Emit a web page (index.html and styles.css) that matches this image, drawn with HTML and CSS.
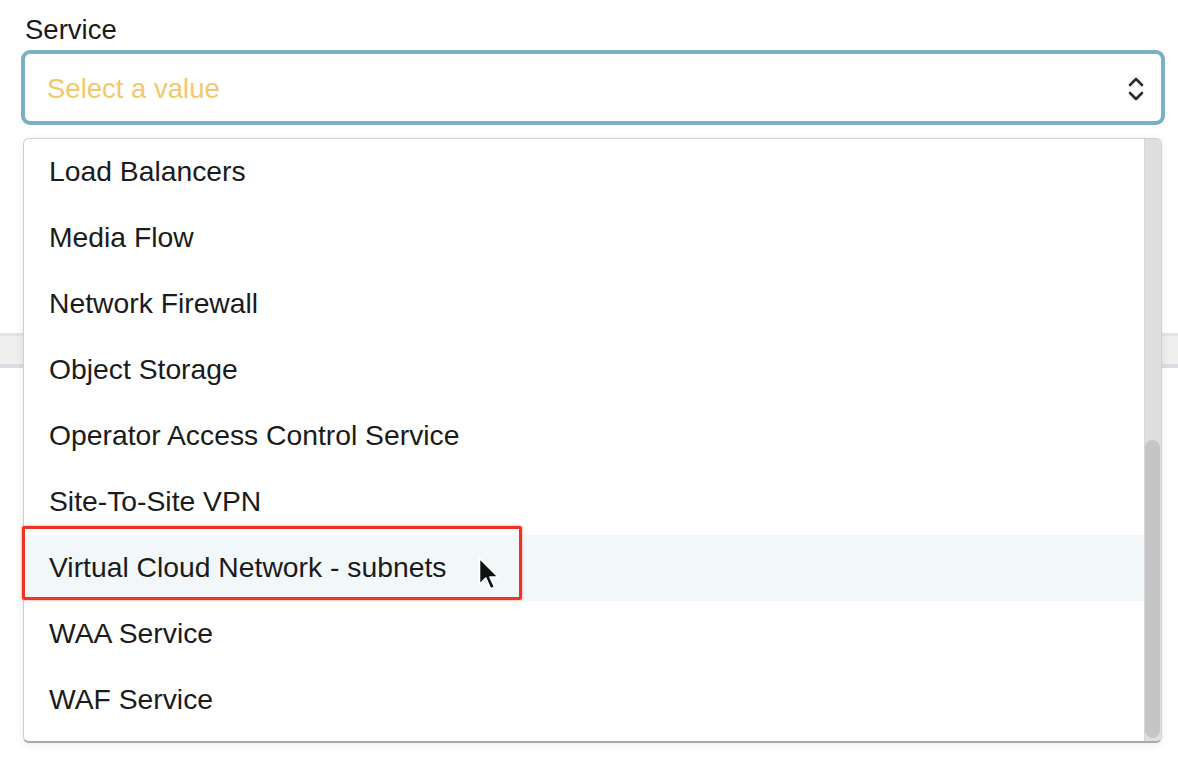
FILE: index.html
```html
<!DOCTYPE html>
<html>
<head>
<meta charset="utf-8">
<link rel="stylesheet" href="styles.css">
</head>
<body>
<div class="page">
  <div class="field">
    <label class="label">Service</label>
    <div class="select">
      <span class="placeholder">Select a value</span>
      <svg class="chev" width="18" height="28" viewBox="0 0 18 28"><path d="M3 10 L9 4 L15 10" fill="none" stroke="#2b2b2b" stroke-width="2.6" stroke-linecap="round" stroke-linejoin="round"/><path d="M3 18 L9 24 L15 18" fill="none" stroke="#2b2b2b" stroke-width="2.6" stroke-linecap="round" stroke-linejoin="round"/></svg>
    </div>
  </div>
  <div class="band"></div>

  <div class="dropdown">
    <ul class="options">
      <li class="opt">Load Balancers</li>
      <li class="opt">Media Flow</li>
      <li class="opt">Network Firewall</li>
      <li class="opt">Object Storage</li>
      <li class="opt">Operator Access Control Service</li>
      <li class="opt">Site-To-Site VPN</li>
      <li class="opt hover">Virtual Cloud Network - subnets</li>
      <li class="opt">WAA Service</li>
      <li class="opt">WAF Service</li>
    </ul>
    <div class="scrollbar"><div class="thumb"></div></div>
  </div>

  <div class="callout"></div>
  <svg class="cursor" width="26" height="38" viewBox="0 0 24 36"><path d="M2 2 L2 27 L8 21 L12.5 31 L16.5 29.5 L12 20 L20 20 Z" fill="#111" stroke="#fff" stroke-width="1.6" stroke-linejoin="round"/></svg>
</div>
</body>
</html>
```
FILE: styles.css
```css
html, body {
  margin: 0;
  padding: 0;
  background: #ffffff;
}
body {
  font-family: "Liberation Sans", Arial, sans-serif;
  color: #1b1b1b;
}
.page {
  position: relative;
  width: 1178px;
  height: 768px;
  overflow: hidden;
}
.field {
  padding: 14px 0 0 21px;
  width: 1144px;
}
.label {
  display: block;
  font-size: 27.5px;
  line-height: 32px;
  color: #1a1a1a;
  margin: 0 0 4px 4px;
}
.select {
  box-sizing: border-box;
  height: 75px;
  width: 1144px;
  border: 4px solid #78b1c5;
  border-radius: 9px;
  display: flex;
  align-items: center;
  justify-content: space-between;
  padding: 0 16px 0 22px;
  background: #fff;
}
.placeholder {
  font-size: 27.5px;
  color: #f1c96c;
  margin-top: 2px;
}
.chev {
  display: block;
  margin-top: 2px;
}
.band {
  margin-top: 208px;
  height: 28px;
  background: #efefef;
  border-top: 3px solid #e2e2e7;
  border-bottom: 4px solid #dcdce2;
}
.dropdown {
  position: absolute;
  left: 23px;
  top: 138px;
  width: 1139px;
  height: 605px;
  box-sizing: border-box;
  background: #fff;
  border: 1px solid #cfcfcf;
  border-bottom: 2px solid #a9a9a9;
  border-radius: 6px;
  box-shadow: 0 2px 10px rgba(0,0,0,0.08);
  overflow: hidden;
  display: flex;
}
.options {
  list-style: none;
  margin: 0;
  padding: 0;
  flex: 1;
}
.opt {
  height: 66px;
  line-height: 64px;
  padding-left: 25px;
  font-size: 28.3px;
  color: #1b1b1b;
}
.opt.hover {
  background: #f2f7fa;
}
.scrollbar {
  width: 16px;
  background: #dfdfdf;
  border-left: 1px solid #d6d6d6;
  position: relative;
}
.thumb {
  position: absolute;
  left: 0;
  right: 1px;
  top: 301px;
  bottom: 3px;
  background: #c5c5c5;
  border-radius: 8px;
}
.callout {
  position: absolute;
  left: 22px;
  top: 526px;
  width: 500px;
  height: 74px;
  box-sizing: border-box;
  border: 3px solid #ee3322;
  border-radius: 2px;
  box-shadow: 0 0 3px rgba(238,51,34,0.5);
}
.cursor {
  position: absolute;
  left: 477px;
  top: 556px;
}
```
